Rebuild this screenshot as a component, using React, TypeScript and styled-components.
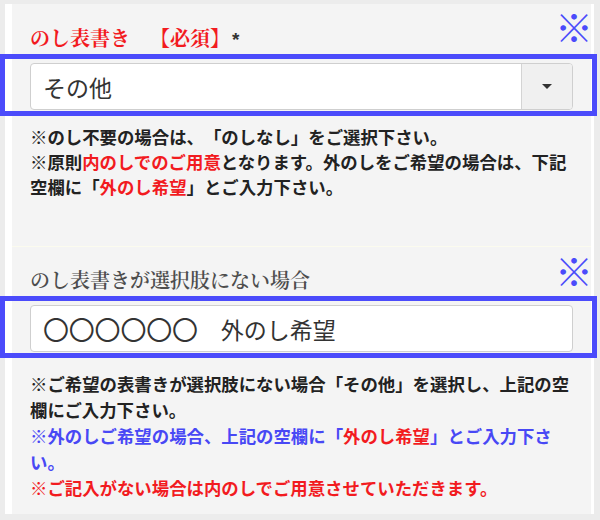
import React from "react";
import styled, { createGlobalStyle } from "styled-components";

const Global = createGlobalStyle`
  html, body { margin: 0; padding: 0; }
  body {
    background: #ececec;
    font-family: "Noto Sans CJK JP", "Noto Sans", sans-serif;
    color: #222;
    text-spacing-trim: space-all;
  }
  * { box-sizing: border-box; }
`;

const RED = "#f21b1f";
const BLUE = "#4848f5";
const FRAME = "#4b4bfb";

const Page = styled.div`
  width: 600px;
  height: 520px;
  padding: 4px 6px 6px 5px;
  overflow: hidden;
`;

const Panel = styled.div`
  height: 100%;
  background: #f4f4f4;
  border-left: 7px solid #fff;
  border-right: 3px solid #fff;
`;

const Section = styled.section<{ $pt: number; $pb: number; $divider?: boolean }>`
  padding: ${(p) => p.$pt}px 18px ${(p) => p.$pb}px 18px;
  border-top: ${(p) => (p.$divider ? "1px solid #fbfbee" : "none")};
`;

const Title = styled.h2<{ $muted?: boolean }>`
  margin: 0;
  font-family: "Noto Serif CJK JP", "Noto Sans CJK JP", serif;
  font-size: 20px;
  line-height: 30px;
  font-weight: ${(p) => (p.$muted ? 600 : 700)};
  color: ${(p) => (p.$muted ? "#4d4d4d" : RED)};
  white-space: pre;
  text-spacing-trim: space-all;
`;

const Star = styled.span`
  color: #333;
  font-family: "Liberation Sans", sans-serif;
  font-weight: 700;
  font-size: 19px;
  margin-left: 2px;
`;

const FieldFrame = styled.div<{ $mt: number }>`
  position: relative;
  margin-top: ${(p) => p.$mt}px;
`;

const Highlight = styled.div`
  position: absolute;
  top: -9px;
  bottom: -6px;
  left: -30px;
  right: -24px;
  border: 5px solid ${FRAME};
  pointer-events: none;
`;

const Mark = styled.span<{ $top: number }>`
  position: absolute;
  top: ${(p) => p.$top}px;
  right: -20px;
  font-family: "Noto Sans CJK JP", sans-serif;
  font-size: 38px;
  line-height: 1;
  font-weight: 500;
  color: ${FRAME};
`;

const SelectBox = styled.div`
  display: flex;
  height: 47px;
  background: #fff;
  border: 1px solid #cfcfcf;
  border-radius: 4px;
  overflow: hidden;
`;

const SelectValue = styled.div`
  flex: 1;
  display: flex;
  align-items: center;
  padding-left: 12px;
  font-size: 23px;
  color: #333;
`;

const SelectButton = styled.div`
  width: 51px;
  display: flex;
  align-items: center;
  justify-content: center;
  background: #f0f0f0;
  border-left: 1px solid #d4d4d4;
`;

const Caret = styled.span`
  width: 0;
  height: 0;
  border-left: 5px solid transparent;
  border-right: 5px solid transparent;
  border-top: 5px solid #333;
`;

const InputBox = styled.div`
  display: flex;
  align-items: center;
  height: 47px;
  padding: 0 12px;
  background: #fff;
  border: 1px solid #cfcfcf;
  border-radius: 4px;
  font-size: 23px;
  color: #333;
  white-space: pre;
`;

const Circles = styled.span`
  font-size: 26px;
  letter-spacing: -0.2px;
`;

const Notes = styled.div<{ $mt: number; $lh: number }>`
  margin-top: ${(p) => p.$mt}px;
  font-size: 17.4px;
  line-height: ${(p) => p.$lh}px;
  font-weight: 700;
`;

const Line = styled.p<{ $tone?: "blue" | "red" }>`
  margin: 0;
  color: ${(p) => (p.$tone === "blue" ? BLUE : p.$tone === "red" ? RED : "#222")};
`;

const Em = styled.span`
  color: ${RED};
`;

export default function App() {
  return (
    <>
      <Global />
      <Page>
        <Panel>
          <Section $pt={19} $pb={47}>
            <Title>
              のし表書き　【必須】<Star>*</Star>
            </Title>
            <FieldFrame $mt={8}>
              <SelectBox>
                <SelectValue>その他</SelectValue>
                <SelectButton>
                  <Caret />
                </SelectButton>
              </SelectBox>
              <Highlight />
              <Mark $top={-56}>※</Mark>
            </FieldFrame>
            <Notes $mt={14} $lh={25}>
              <Line>※のし不要の場合は、「のしなし」をご選択下さい。</Line>
              <Line>
                ※原則<Em>内のしでのご用意</Em>となります。外のしをご希望の場合は、下記空欄に「<Em>外のし希望</Em>」とご入力下さい。
              </Line>
            </Notes>
          </Section>
          <Section $pt={18} $pb={14} $divider>
            <Title $muted>のし表書きが選択肢にない場合</Title>
            <FieldFrame $mt={10}>
              <InputBox>
                <Circles>〇〇〇〇〇〇</Circles>　外のし希望
              </InputBox>
              <Highlight />
              <Mark $top={-54}>※</Mark>
            </FieldFrame>
            <Notes $mt={19} $lh={26}>
              <Line>※ご希望の表書きが選択肢にない場合「その他」を選択し、上記の空欄にご入力下さい。</Line>
              <Line $tone="blue">
                ※外のしご希望の場合、上記の空欄に「<Em>外のし希望</Em>」とご入力下さい。
              </Line>
              <Line $tone="red">※ご記入がない場合は内のしでご用意させていただきます。</Line>
            </Notes>
          </Section>
        </Panel>
      </Page>
    </>
  );
}
